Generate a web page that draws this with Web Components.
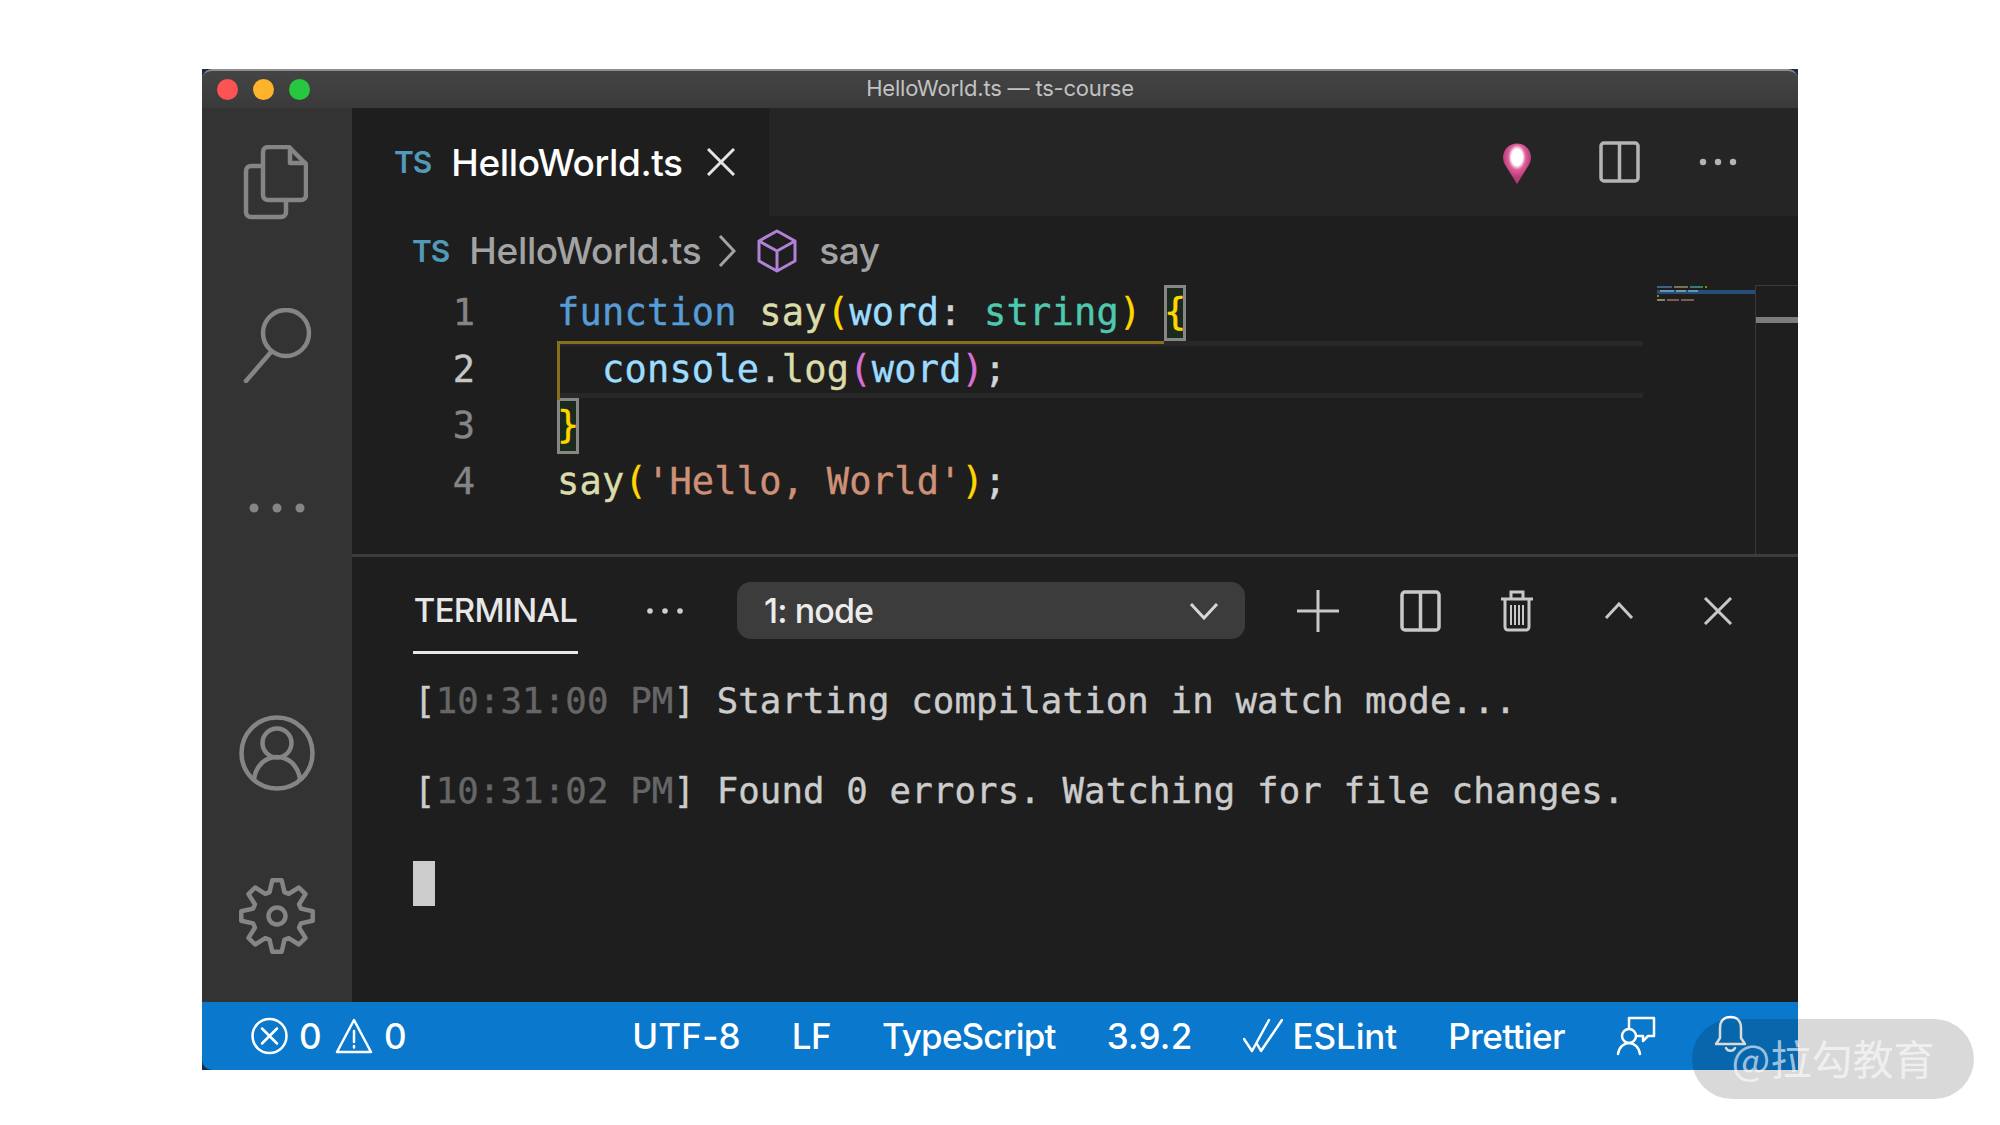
<!DOCTYPE html>
<html>
<head>
<meta charset="utf-8">
<title>HelloWorld.ts</title>
<style>
  html, body { margin: 0; background: #fff; }
  body { width: 2000px; height: 1125px; overflow: hidden; font-family: Inter, "Liberation Sans", sans-serif; }
</style>
</head>
<body>
<vs-window></vs-window>
<water-mark>@拉勾教育</water-mark>

<script>
const UI_FONT = 'Inter, "Liberation Sans", sans-serif';
const MONO_FONT = '"DejaVu Sans Mono", "Liberation Mono", monospace';

class VsWindow extends HTMLElement {
  connectedCallback() {
    this.attachShadow({ mode: "open" });
    this.shadowRoot.innerHTML = `<style>
      :host { display: flex; flex-direction: column; width: 1596px; height: 1001px; margin: 69px 0 0 202px; background: #1b2a45; }
      .main { flex: 1; display: flex; min-height: 0; }
      .right { flex: 1; display: flex; flex-direction: column; min-width: 0; background: #1e1e1e; }
    </style>
    <title-bar>HelloWorld.ts — ts-course</title-bar>
    <div class="main">
      <activity-bar></activity-bar>
      <div class="right">
        <editor-tabs></editor-tabs>
        <bread-crumbs></bread-crumbs>
        <code-editor></code-editor>
        <terminal-panel></terminal-panel>
      </div>
    </div>
    <status-bar></status-bar>`;
  }
}

class TitleBar extends HTMLElement {
  connectedCallback() {
    this.attachShadow({ mode: "open" });
    this.shadowRoot.innerHTML = `<style>
      :host { display: flex; align-items: center; position: relative; height: 39px; box-sizing: border-box; padding-left: 15px; gap: 15px;
        border-top: 2px solid #8e8e8e; border-radius: 10px 10px 0 0; background: linear-gradient(#444, #3a3a3a); }
      i { width: 21px; height: 21px; border-radius: 50%; }
      .title { position: absolute; left: 0; right: 0; top: 0; text-align: center; font: 22px/35px ${UI_FONT}; color: #c2c2c2; letter-spacing: -.2px; }
    </style>
    <i style="background:#fd5354"></i><i style="background:#fdb32c"></i><i style="background:#27c83f"></i>
    <div class="title"><slot></slot></div>`;
  }
}

function gearPath(cx, cy) {
  // eight teeth
  let d = "";
  for (let i = 0; i < 8; i++) {
    const a = (i * Math.PI) / 4 - Math.PI / 2;
    const pts = [[25, -0.3], [36, -0.13], [36, 0.13], [25, 0.3]];
    pts.forEach(([r, o], j) => {
      const x = (cx + r * Math.cos(a + o)).toFixed(1);
      const y = (cy + r * Math.sin(a + o)).toFixed(1);
      d += (i === 0 && j === 0 ? "M" : "L") + x + " " + y + " ";
    });
  }
  return d + "Z";
}

class ActivityBar extends HTMLElement {
  connectedCallback() {
    this.attachShadow({ mode: "open" });
    this.shadowRoot.innerHTML = `<style>
      :host { display: flex; flex-direction: column; align-items: center; flex: none; width: 150px; box-sizing: border-box; padding: 37px 0 48px; background: #333; }
      svg { display: block; fill: none; stroke: #858585; stroke-width: 4.5; stroke-linecap: round; stroke-linejoin: round; }
      .dots { fill: #858585; stroke: none; }
      .search { margin-top: 88px; margin-left: 1px; }
      .more { margin-top: 120px; }
      .account { margin-top: auto; }
      .gear { margin-top: 87px; }
    </style>
    <svg width="65" height="75" viewBox="0 0 65 75" style="margin-right:4px"><path d="M25 2H46L63 19V50a5 5 0 0 1-5 5H25a5 5 0 0 1-5-5V7a5 5 0 0 1 5-5Z"/><path d="M47 3V18H62"/><path d="M20 21H8a5 5 0 0 0-5 5V67a5 5 0 0 0 5 5H38a5 5 0 0 0 5-5V55"/></svg>
    <svg class="search" width="70" height="75" viewBox="0 0 70 75"><circle cx="43" cy="25" r="23"/><path d="M28 44 3 73"/></svg>
    <svg class="more dots" width="56" height="10" viewBox="0 0 56 10"><circle cx="5" cy="5" r="4.5"/><circle cx="28" cy="5" r="4.5"/><circle cx="51" cy="5" r="4.5"/></svg>
    <svg class="account" width="76" height="76" viewBox="0 0 76 76"><circle cx="38" cy="38" r="35.5"/><circle cx="38" cy="28" r="14.5"/><path d="M15 64C17 50 27 42 38 42S59 50 61 64"/></svg>
    <svg class="gear" width="76" height="76" viewBox="0 0 76 76"><path d="${gearPath(38, 38)}"/><circle cx="38" cy="38" r="8.5"/></svg>`;
  }
}

class EditorTabs extends HTMLElement {
  connectedCallback() {
    this.attachShadow({ mode: "open" });
    this.shadowRoot.innerHTML = `<style>
      :host { display: flex; align-items: center; flex: none; height: 108px; background: #252526; }
      .tab { display: flex; align-items: center; width: 417px; height: 108px; box-sizing: border-box; padding-left: 42px; background: #1e1e1e; }
      .ts { font: 600 30px ${UI_FONT}; color: #519aba; letter-spacing: -1px; }
      .name { font: 500 37px ${UI_FONT}; color: #fff; margin-left: 20px; letter-spacing: -.4px; }
      svg { display: block; flex: none; }
      .close { margin-left: 24px; }
      .pin { margin: 1px 0 0 733px; }
      .split { margin-left: 67px; }
      .more { margin-left: 59px; }
    </style>
    <div class="tab">
      <span class="ts">TS</span><span class="name">HelloWorld.ts</span>
      <svg class="close" width="28" height="28" viewBox="0 0 28 28" stroke="#e4e4e4" stroke-width="3"><path d="M1 1 27 27M27 1 1 27"/></svg>
    </div>
    <svg class="pin" width="30" height="42" viewBox="0 0 30 42">
      <defs><radialGradient id="g" cx="50%" cy="34%" r="50%"><stop offset="40%" stop-color="#fff"/><stop offset="62%" stop-color="#df5f99"/><stop offset="100%" stop-color="#b93a78"/></radialGradient></defs>
      <path d="M15 42 3.5 23.5a14 14 0 1 1 23 0Z" fill="url(#g)"/>
    </svg>
    <svg class="split" width="41" height="42" viewBox="0 0 41 42" fill="none" stroke="#b4b4b4" stroke-width="3.5"><rect x="2" y="2" width="37" height="38" rx="3"/><path d="M20.5 2V40"/></svg>
    <svg class="more" width="38" height="8" viewBox="0 0 38 8" fill="#b4b4b4"><circle cx="4" cy="4" r="3.2"/><circle cx="19" cy="4" r="3.2"/><circle cx="34" cy="4" r="3.2"/></svg>`;
  }
}

class BreadCrumbs extends HTMLElement {
  connectedCallback() {
    this.attachShadow({ mode: "open" });
    this.shadowRoot.innerHTML = `<style>
      :host { display: flex; align-items: center; flex: none; height: 69px; box-sizing: border-box; padding-left: 60px; background: #1e1e1e; }
      .ts { font: 600 30px ${UI_FONT}; color: #519aba; letter-spacing: -1px; }
      .name { font: 500 37px ${UI_FONT}; color: #a3a3a3; margin-left: 20px; letter-spacing: -.35px; }
      .say { font: 500 37px ${UI_FONT}; color: #a3a3a3; margin-left: 22px; letter-spacing: -.4px; }
      svg { display: block; flex: none; }
      .chev { margin-left: 17px; }
      .cube { margin-left: 21px; }
    </style>
    <span class="ts">TS</span><span class="name">HelloWorld.ts</span>
    <svg class="chev" width="18" height="34" viewBox="0 0 18 34" fill="none" stroke="#a3a3a3" stroke-width="3"><path d="M2 2 16 17 2 32"/></svg>
    <svg class="cube" width="40" height="44" viewBox="0 0 40 44" fill="none" stroke="#b180d7" stroke-width="3" stroke-linejoin="round"><path d="M20 2 38 12V32L20 42 2 32V12Z"/><path d="M2 12 20 22 38 12M20 22V42"/></svg>
    <span class="say">say</span>`;
  }
}

class CodeLine extends HTMLElement {
  connectedCallback() {
    this.attachShadow({ mode: "open" });
    const on = this.hasAttribute("active");
    this.shadowRoot.innerHTML = `<style>
      :host { display: flex; height: 56.3px; font: 37px/56.3px ${MONO_FONT}; color: #d4d4d4; white-space: pre; -webkit-text-stroke: .4px; }
      .num { flex: none; width: 123px; text-align: right; color: ${on ? "#c6c6c6" : "#858585"}; ${on ? "line-height: 58px;" : ""} }
      .text { flex: 1; margin-left: 82px; box-sizing: border-box; letter-spacing: .2px;
        ${on ? "border-top: 5px solid #282828; border-bottom: 5px solid #282828; line-height: 48px;" : ""} }
    </style>
    <div class="num">${this.getAttribute("num")}</div><div class="text"><slot></slot></div>`;
  }
}

class CodeEditor extends HTMLElement {
  connectedCallback() {
    this.attachShadow({ mode: "open" });
    this.shadowRoot.innerHTML = `<style>
      :host { display: flex; flex: 1; min-height: 0; background: #1e1e1e; }
      .lines { position: relative; width: 1291px; flex: none; }
      .kw { color: #569cd6; } .fn { color: #dcdcaa; } .var { color: #9cdcfe; } .type { color: #4ec9b0; }
      .str { color: #ce9178; } .y { color: #ffd700; } .m { color: #da70d6; }
      .brace { display: inline-block; box-sizing: border-box; width: 22px; height: 56.3px; color: #ffd700; background: #1b2a1c; box-shadow: inset 0 0 0 3px #868686; vertical-align: top; }
      .guide { position: absolute; left: 205px; top: 56px; width: 607px; height: 59px; box-sizing: border-box; border-top: 3px solid #86701a; border-left: 3px solid #86701a; }
    </style>
    <div class="lines">
      <code-line num="1"><span class="kw">function</span> <span class="fn">say</span><span class="y">(</span><span class="var">word</span>: <span class="type">string</span><span class="y">)</span> <span class="brace">{</span></code-line>
      <code-line num="2" active>  <span class="var">console</span>.<span class="fn">log</span><span class="m">(</span><span class="var">word</span><span class="m">)</span>;</code-line>
      <code-line num="3"><span class="brace">}</span></code-line>
      <code-line num="4"><span class="fn">say</span><span class="y">(</span><span class="str">'Hello, World'</span><span class="y">)</span>;</code-line>
      <div class="guide"></div>
    </div>
    <mini-map></mini-map>`;
  }
}

class MiniMap extends HTMLElement {
  connectedCallback() {
    this.attachShadow({ mode: "open" });
    this.shadowRoot.innerHTML = `<style>
      :host { display: flex; flex: 1; padding-left: 14px; }
      .map { width: 98px; flex: none; padding-top: 1px; }
      .row { display: flex; gap: 2px; height: 3px; margin-bottom: 1px; opacity: .55; }
      .row i { height: 2px; }
      .hl { background: #264f78; height: 4px; padding-left: 3px; box-sizing: border-box; opacity: 1; }
      .hl i { opacity: .5; }
      .scroll { flex: 1; border-left: 1px solid #3a3a3a; border-top: 1px solid #3a3a3a; }
      .thumb { height: 6px; margin-top: 31px; background: #7c7c7c; }
    </style>
    <div class="map">
      <div class="row"><i style="width:15px;background:#569cd6"></i><i style="width:14px;background:#b9b98f"></i><i style="width:13px;background:#4ec9b0"></i><i style="width:2px;background:#ffd700"></i></div>
      <div class="row hl"><i style="width:14px;background:#9cdcfe"></i><i style="width:10px;background:#dcdcaa"></i><i style="width:10px;background:#9cdcfe"></i></div>
      <div class="row"><i style="width:2px;background:#ffd700"></i></div>
      <div class="row"><i style="width:8px;background:#dcdcaa"></i><i style="width:12px;background:#ce9178"></i><i style="width:13px;background:#ce9178"></i></div>
    </div>
    <div class="scroll"><div class="thumb"></div></div>`;
  }
}

class TerminalPanel extends HTMLElement {
  connectedCallback() {
    this.attachShadow({ mode: "open" });
    this.shadowRoot.innerHTML = `<style>
      :host { display: block; flex: none; height: 448px; box-sizing: border-box; border-top: 3px solid #3c3c3c; padding-left: 61px; background: #1e1e1e; }
      .head { display: flex; align-items: flex-start; height: 99px; box-sizing: border-box; padding-top: 25px; }
      .tab { width: 165px; height: 72px; box-sizing: border-box; border-bottom: 3px solid #e8e8e8; font: 500 33px/57px ${UI_FONT}; color: #e7e7e7; letter-spacing: -.7px; text-align: center; white-space: nowrap; }
      .cell { display: flex; align-items: center; height: 57px; flex: none; }
      svg { display: block; }
      .select { width: 508px; height: 57px; box-sizing: border-box; padding: 0 26px 0 27px; border-radius: 14px; background: #3c3c3c; justify-content: space-between; font: 500 34px ${UI_FONT}; color: #ececec; letter-spacing: -.9px; }
      .body { padding-left: 1px; font: 35.7px/90px ${MONO_FONT}; letter-spacing: .13px; color: #cccccc; -webkit-text-stroke: .4px; }
      .body div { white-space: pre; }
      .t { color: #666; }
      .cursor { width: 22px; height: 45px; margin: 25px 0 0 -1px; background: #ccc; }
    </style>
    <div class="head">
      <div class="tab">TERMINAL</div>
      <div class="cell" style="margin-left:68px"><svg width="38" height="8" viewBox="0 0 38 8" fill="#cfcfcf"><circle cx="4" cy="4" r="2.8"/><circle cx="19" cy="4" r="2.8"/><circle cx="34" cy="4" r="2.8"/></svg></div>
      <div class="cell select" style="margin-left:53px"><span>1: node</span><svg width="30" height="18" viewBox="0 0 30 18" fill="none" stroke="#d8d8d8" stroke-width="3"><path d="M2 2 15 16 28 2"/></svg></div>
      <div class="cell" style="margin-left:52px"><svg width="42" height="42" viewBox="0 0 42 42" fill="none" stroke="#c8c8c8" stroke-width="3"><path d="M21 0V42M0 21H42"/></svg></div>
      <div class="cell" style="margin-left:61px"><svg width="41" height="42" viewBox="0 0 41 42" fill="none" stroke="#c8c8c8" stroke-width="3.5"><rect x="2" y="2" width="37" height="38" rx="3"/><path d="M20.5 2V40"/></svg></div>
      <div class="cell" style="margin-left:59px"><svg width="34" height="42" viewBox="0 0 34 42" fill="none" stroke="#c8c8c8" stroke-width="3"><path d="M1 9H33M11 8V2H23V8M5 9V37a3 3 0 0 0 3 3H26a3 3 0 0 0 3-3V9"/><path stroke-width="2" d="M11 15V35M15 15V35M19 15V35M23 15V35"/></svg></div>
      <div class="cell" style="margin-left:70px"><svg width="30" height="18" viewBox="0 0 30 18" fill="none" stroke="#c8c8c8" stroke-width="3"><path d="M2 16 15 2 28 16"/></svg></div>
      <div class="cell" style="margin-left:69px"><svg width="30" height="28" viewBox="0 0 30 28" fill="none" stroke="#c8c8c8" stroke-width="3"><path d="M2 1 28 27M28 1 2 27"/></svg></div>
    </div>
    <div class="body">
      <div>[<span class="t">10:31:00 PM</span>] Starting compilation in watch mode...</div>
      <div>[<span class="t">10:31:02 PM</span>] Found 0 errors. Watching for file changes.</div>
      <div class="cursor"></div>
    </div>`;
  }
}

class StatusItem extends HTMLElement {
  connectedCallback() {
    this.attachShadow({ mode: "open" });
    this.shadowRoot.innerHTML = `<style>
      :host { display: flex; align-items: center; gap: 9px; flex: none; white-space: nowrap; }
    </style><slot></slot>`;
  }
}

class StatusBar extends HTMLElement {
  connectedCallback() {
    this.attachShadow({ mode: "open" });
    this.shadowRoot.innerHTML = `<style>
      :host { display: flex; align-items: center; justify-content: space-between; flex: none; height: 68px; box-sizing: border-box; padding: 0 50px 0 49px; border-radius: 0 0 0 10px;
        background: #0a78cc; color: #fff; font: 500 35px ${UI_FONT}; letter-spacing: -.6px; }
      .group { display: flex; align-items: center; gap: 51px; }
      .left { gap: 14px; }
      svg { display: block; flex: none; fill: none; stroke: #fff; stroke-width: 2.5; stroke-linejoin: round; stroke-linecap: round; }
    </style>
    <div class="group left">
      <status-item style="gap:11px"><svg width="37" height="38" viewBox="0 0 37 38"><circle cx="18.5" cy="19" r="17"/><path d="M11 11.5 26 26.5M26 11.5 11 26.5"/></svg><span>0</span></status-item>
      <status-item style="gap:11px"><svg width="38" height="36" viewBox="0 0 38 36"><path d="M19 2 36 34H2Z"/><path d="M19 13V24M19 28V29.5"/></svg><span>0</span></status-item>
    </div>
    <div class="group">
      <status-item style="letter-spacing:.2px">UTF-8</status-item>
      <status-item>LF</status-item>
      <status-item style="letter-spacing:-.85px">TypeScript</status-item>
      <status-item style="letter-spacing:.2px">3.9.2</status-item>
      <status-item style="letter-spacing:-.1px"><svg width="40" height="34" viewBox="0 0 40 34"><path d="M1 20 9 32 26 1M14 25 18 32 39 1"/></svg>ESLint</status-item>
      <status-item>Prettier</status-item>
      <status-item><svg width="40" height="40" viewBox="0 0 40 40"><path d="M13 12V2H38V20H32L27 25V20H22"/><circle cx="13" cy="20" r="7"/><path d="M2 38C3 31 8 27 13 27S23 31 24 38"/></svg></status-item>
      <status-item style="margin-left:6px"><svg width="35" height="42" viewBox="0 0 35 42"><path d="M3 29H32L28 23V13C28 6 24 2 17.5 2S7 6 7 13V23ZM13 33a5 5 0 0 0 9 0"/></svg></status-item>
    </div>`;
  }
}

class WaterMark extends HTMLElement {
  connectedCallback() {
    this.attachShadow({ mode: "open" });
    this.shadowRoot.innerHTML = `<style>
      :host { position: absolute; left: 1692px; top: 1019px; display: flex; align-items: center; justify-content: center; width: 282px; height: 80px; box-sizing: border-box; padding-bottom: 4px; border-radius: 40px;
        background: rgba(0,0,0,.15); color: rgba(255,255,255,.62); font: 41px "Noto Sans CJK SC", sans-serif; }
    </style><slot></slot>`;
  }
}

customElements.define("title-bar", TitleBar);
customElements.define("activity-bar", ActivityBar);
customElements.define("editor-tabs", EditorTabs);
customElements.define("bread-crumbs", BreadCrumbs);
customElements.define("code-line", CodeLine);
customElements.define("mini-map", MiniMap);
customElements.define("code-editor", CodeEditor);
customElements.define("terminal-panel", TerminalPanel);
customElements.define("status-item", StatusItem);
customElements.define("status-bar", StatusBar);
customElements.define("water-mark", WaterMark);
customElements.define("vs-window", VsWindow);
</script>
</body>
</html>
